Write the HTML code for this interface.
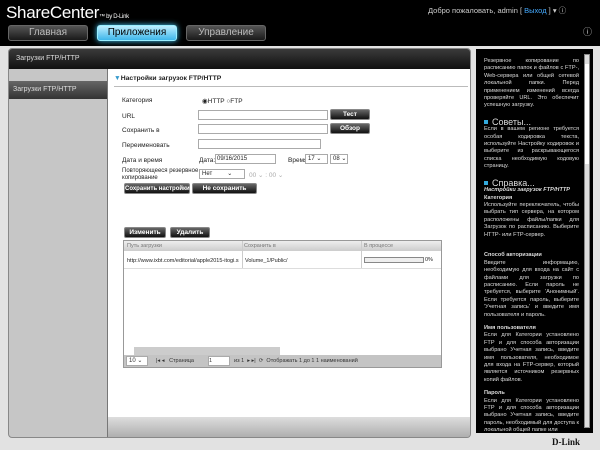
<!DOCTYPE html><html><head><meta charset="utf-8"><style>
*{margin:0;padding:0;box-sizing:border-box}
body{width:600px;height:450px;overflow:hidden;background:#e2e2e2;font-family:"Liberation Sans",sans-serif;font-size:6.5px;color:#222;position:relative}
.a{position:absolute;white-space:nowrap}
.hdr{left:0;top:0;width:600px;height:46px;background:#000}
.tab{top:25px;height:16px;width:80px;border-radius:3px;background:linear-gradient(#555,#1a1a1a);border:1px solid #666;color:#bbb;font-size:10px;text-align:center;line-height:14px}
.tab.on{background:linear-gradient(#bdeeff,#3fb6ea);color:#000;box-shadow:0 0 6px #4cf;border-color:#9ef}
.inp{background:#fff;border:1px solid #aaa;height:10px}
.btn{background:linear-gradient(#666,#111);color:#fff;font-weight:bold;font-size:6.5px;text-align:center;line-height:10px;height:11px;border-radius:2px;border:1px solid #888}
.sel{background:#fff;border:1px solid #aaa;height:10px;font-size:6px;padding-left:2px;line-height:9px}
.help{left:476px;top:49px;width:117px;height:384px;background:#000;color:#ddd;font-size:5.6px;line-height:7.4px;padding:9px 14px 0 8px;text-align:justify;overflow:hidden;white-space:normal}
.help h3{font-size:9px;font-weight:normal;color:#ddd;margin-top:9px}
.help h3:before{content:"";display:inline-block;width:4px;height:4px;background:#3ad;margin-right:4px;vertical-align:middle}
.help b{display:block;margin-top:6px}
</style></head><body>
<div class="a hdr"></div>
<div class="a" style="left:6px;top:3px;color:#fff;font-size:17px;letter-spacing:-0.3px">ShareCenter<span style="font-size:6px">™ by D-Link</span></div>
<div class="a" style="left:428px;top:5px;color:#ccc;font-size:7.5px">Добро пожаловать, admin [ <span style="color:#4af">Выход</span> ] ▾ ⓘ</div>
<div class="a" style="left:583px;top:25px;color:#ccc;font-size:9px">ⓘ</div>
<div class="a tab" style="left:8px">Главная</div>
<div class="a tab on" style="left:97px">Приложения</div>
<div class="a tab" style="left:186px">Управление</div>
<div class="a" style="left:8px;top:48px;width:463px;height:390px;background:#c6c6c6;border:1px solid #888;border-radius:4px;overflow:hidden">
<div class="a" style="left:0;top:0;width:463px;height:20px;background:linear-gradient(#3a3a3a,#111);color:#ddd;font-size:7px;line-height:20px;padding-left:7px">Загрузки FTP/HTTP</div>
<div class="a" style="left:0;top:32px;width:98px;height:18px;background:linear-gradient(#666,#333);color:#ddd;font-size:7px;line-height:18px;padding-left:4px">Загрузки FTP/HTTP</div>
<div class="a" style="left:98px;top:20px;width:365px;height:348px;background:#fff;border-left:1px solid #777"></div>
<div class="a" style="left:98px;top:368px;width:365px;height:22px;background:linear-gradient(#ddd,#aaa);border-left:1px solid #777"></div>
</div>
<div class="a" style="left:114px;top:75px;font-weight:bold;font-size:6.8px"><span style="color:#39c">▼</span>Настройки загрузок FTP/HTTP</div>
<div class="a" style="left:114px;top:86px;width:354px;border-top:1px solid #bbb"></div>
<div class="a" style="left:122px;top:97px">Категория</div>
<div class="a" style="left:202px;top:97px">◉HTTP ○FTP</div>
<div class="a" style="left:122px;top:113px">URL</div>
<div class="a inp" style="left:198px;top:110px;width:130px"></div><div class="a btn" style="left:330px;top:109px;width:40px">Тест</div>
<div class="a" style="left:122px;top:127px">Сохранить в</div>
<div class="a inp" style="left:198px;top:124px;width:130px"></div><div class="a btn" style="left:330px;top:123px;width:40px">Обзор</div>
<div class="a" style="left:122px;top:142px">Переименовать</div>
<div class="a inp" style="left:198px;top:139px;width:123px"></div>
<div class="a" style="left:122px;top:157px">Дата и время</div>
<div class="a" style="left:199px;top:157px">Дата:</div><div class="a inp" style="left:215px;top:154px;width:61px;font-size:6px;padding-left:1px;line-height:8px">09/16/2015</div>
<div class="a" style="left:288px;top:157px">Время:</div><div class="a sel" style="left:305px;top:154px;width:23px">17 ⌄</div><div class="a sel" style="left:330px;top:154px;width:18px">08 ⌄</div>
<div class="a" style="left:122px;top:168px;line-height:7px;font-size:6px">Повторяющееся резервное<br>копирование</div>
<div class="a sel" style="left:199px;top:169px;width:46px">Нет &nbsp;&nbsp;&nbsp;&nbsp;&nbsp;&nbsp;&nbsp;&nbsp;⌄</div>
<div class="a" style="left:249px;top:171px;color:#aaa">00 ⌄ : 00 ⌄</div>
<div class="a btn" style="left:124px;top:183px;width:66px;font-size:6px">Сохранить настройки</div>
<div class="a btn" style="left:192px;top:183px;width:65px">Не сохранить</div>
<div class="a btn" style="left:124px;top:227px;width:42px">Изменить</div>
<div class="a btn" style="left:170px;top:227px;width:40px">Удалить</div>
<div class="a" style="left:123px;top:240px;width:319px;height:128px;border:1px solid #999;background:#fff">
<div class="a" style="left:0;top:0;width:317px;height:10px;background:linear-gradient(#eee,#ccc);color:#777;font-size:5.5px;line-height:10px"><span class="a" style="left:3px">Путь загрузки</span><span class="a" style="left:120px">Сохранить в</span><span class="a" style="left:240px">В процессе</span></div>
<div class="a" style="left:118px;top:0;height:27px;border-left:1px solid #ccc"></div>
<div class="a" style="left:237px;top:0;height:27px;border-left:1px solid #ccc"></div>
<div class="a" style="left:3px;top:17px;font-size:5.5px">http://www.ixbt.com/editorial/apple2015-itogi.s</div>
<div class="a" style="left:121px;top:17px;font-size:5.5px">Volume_1/Public/</div>
<div class="a" style="left:240px;top:16px;width:60px;height:6px;border:1px solid #888;background:#eee"></div>
<div class="a" style="left:301px;top:16px;font-size:5.5px">0%</div>
<div class="a" style="left:0;top:27px;width:317px;border-top:1px solid #ddd"></div>
<div class="a" style="left:10px;top:106px;width:146px;height:8px;background:#ccc"></div>
<div class="a" style="left:0;top:114px;width:317px;height:12px;background:#c4c4c4;font-size:5.5px;line-height:12px;color:#333"><span class="a sel" style="left:2px;top:1px;width:22px">10 ⌄</span><span class="a" style="left:32px">|◂ ◂ &nbsp;&nbsp;Страница</span><span class="a inp" style="left:84px;top:1px;width:22px;font-size:5.5px;line-height:8px">1</span><span class="a" style="left:110px">из 1 &nbsp;▸ ▸| &nbsp;⟳ &nbsp;Отображать 1 до 1 1 наименований</span></div>
</div>
<div class="a help">Резервное копирование по расписанию папок и файлов с FTP-, Web-сервера или общей сетевой локальной папки. Перед применением изменений всегда проверяйте URL. Это обеспечит успешную загрузку.
<h3>Советы...</h3>Если в вашем регионе требуется особая кодировка текста, используйте Настройку кодировок и выберите из раскрывающегося списка необходимую кодовую страницу.
<h3>Справка...</h3><i><b style="margin-top:0">Настройки загрузок FTP/HTTP</b></i><b style="margin-top:0">Категория</b>Используйте переключатель, чтобы выбрать тип сервера, на котором расположены файлы/папки для Загрузок по расписанию. Выберите HTTP- или FTP-сервер.<br><br><b>Способ авторизации</b>Введите информацию, необходимую для входа на сайт с файлами для загрузки по расписанию. Если пароль не требуется, выберите 'Анонимный'. Если требуется пароль, выберите 'Учетная запись' и введите имя пользователя и пароль.<br><b>Имя пользователя</b>Если для Категории установлено FTP и для способа авторизации выбрано Учетная запись, введите имя пользователя, необходимое для входа на FTP-сервер, который является источником резервных копий файлов.<br><b>Пароль</b>Если для Категории установлено FTP и для способа авторизации выбрано Учетная запись, введите пароль, необходимый для доступа к локальной общей папке или</div>
<div class="a" style="left:584px;top:54px;width:6px;height:374px;background:#ddd;border:1px solid #888"></div>
<div class="a" style="left:585px;top:64px;width:4px;height:100px;background:#fff"></div>
<div class="a" style="left:552px;top:437px;font-weight:bold;font-size:9px;color:#111;font-family:'Liberation Serif',serif">D-Link</div>
</body></html>
